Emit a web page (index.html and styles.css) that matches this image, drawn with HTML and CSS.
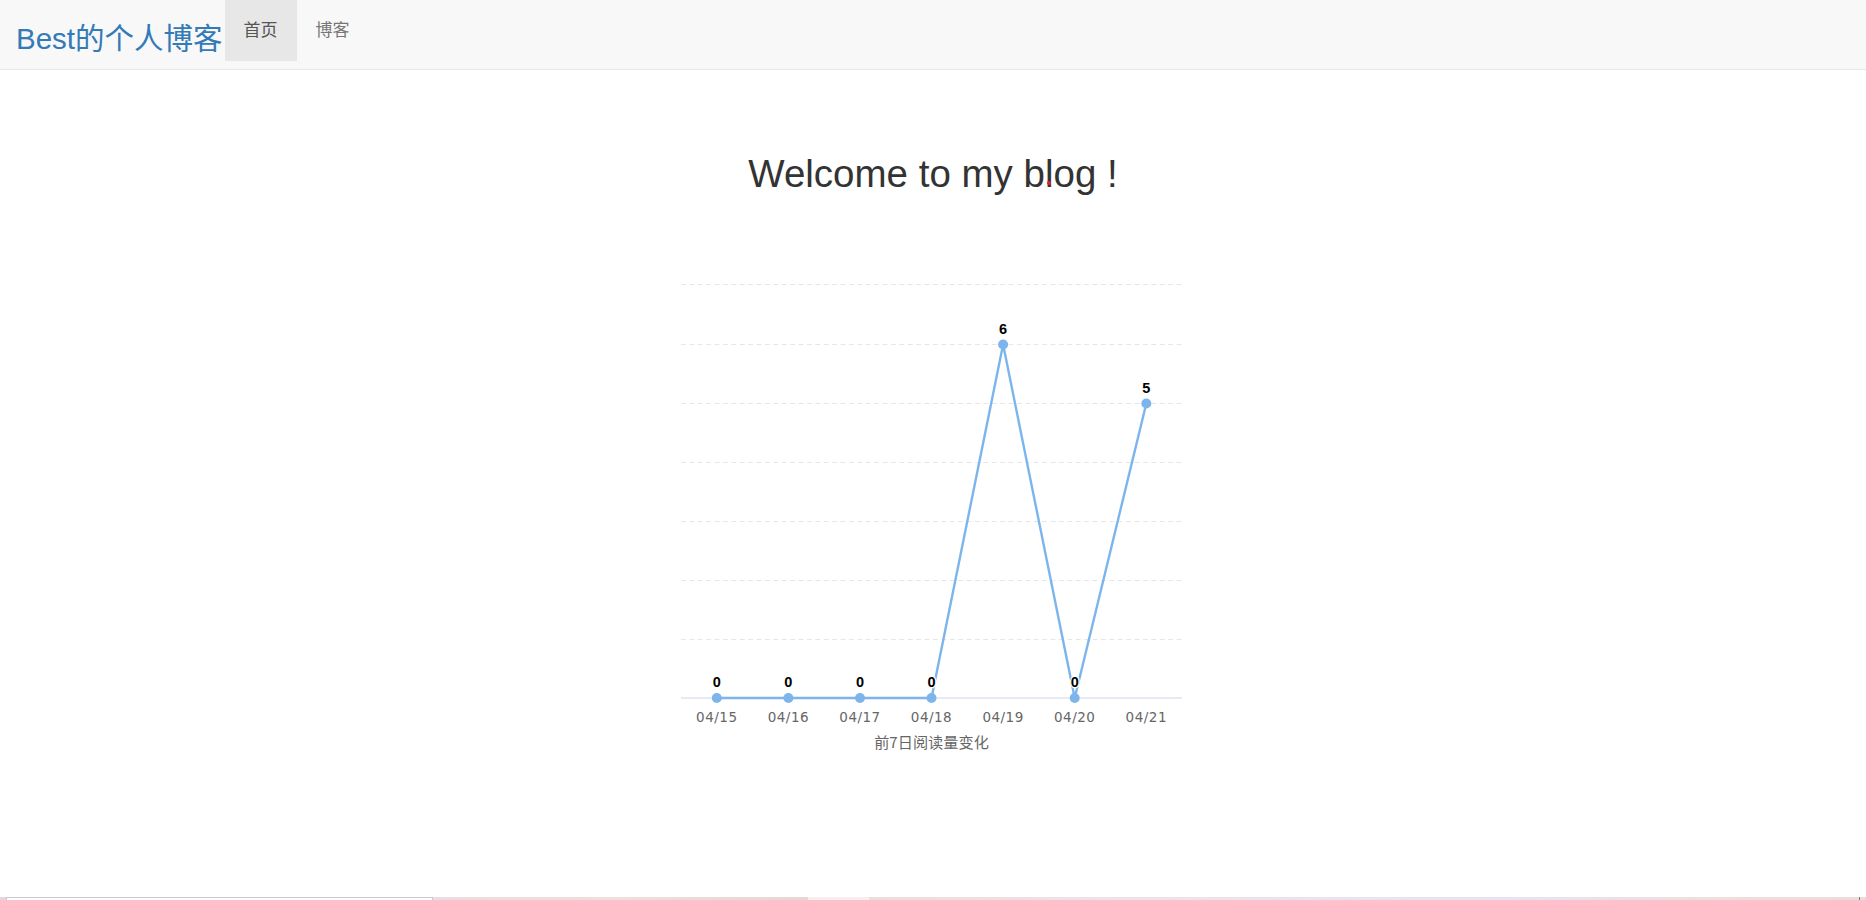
FILE: index.html
```html
<!DOCTYPE html>
<html lang="zh-CN">
<head>
<meta charset="utf-8">
<title>Best的个人博客</title>
<link rel="stylesheet" href="styles.css">
</head>
<body>
<div class="page">
  <nav class="navbar">
    <a class="brand" href="#">Best的个人博客</a>
    <ul class="nav">
      <li class="nav-item active"><a href="#">首页</a></li>
      <li class="nav-item"><a href="#">博客</a></li>
    </ul>
  </nav>

  <main class="main">
    <h1 class="welcome">Welcome to my b<span class="mark">l</span>og !</h1>

    <svg class="chart" width="540" height="500" viewBox="0 0 540 500" xmlns="http://www.w3.org/2000/svg">
      <g class="grid">
        <line x1="18" x2="519" y1="379.5" y2="379.5"/>
        <line x1="18" x2="519" y1="320.5" y2="320.5"/>
        <line x1="18" x2="519" y1="261.5" y2="261.5"/>
        <line x1="18" x2="519" y1="202.5" y2="202.5"/>
        <line x1="18" x2="519" y1="143.5" y2="143.5"/>
        <line x1="18" x2="519" y1="84.5" y2="84.5"/>
        <line x1="18" x2="519" y1="24.5" y2="24.5"/>
      </g>
      <line class="axis" x1="18" x2="519" y1="438" y2="438"/>
      <polyline class="series" points="53.8,438 125.4,438 197,438 268.5,438 340.1,84.5 411.7,438 483.3,143.5"/>
      <g class="markers">
        <circle cx="53.8" cy="438" r="5"/>
        <circle cx="125.4" cy="438" r="5"/>
        <circle cx="197" cy="438" r="5"/>
        <circle cx="268.5" cy="438" r="5"/>
        <circle cx="340.1" cy="84.5" r="5"/>
        <circle cx="411.7" cy="438" r="5"/>
        <circle cx="483.3" cy="143.5" r="5"/>
      </g>
      <g class="data-labels">
        <text x="53.8" y="427">0</text>
        <text x="125.4" y="427">0</text>
        <text x="197" y="427">0</text>
        <text x="268.5" y="427">0</text>
        <text x="340.1" y="73.5">6</text>
        <text x="411.7" y="427">0</text>
        <text x="483.3" y="132.5">5</text>
      </g>
      <g class="x-labels">
        <text x="53.8" y="462">04/15</text>
        <text x="125.4" y="462">04/16</text>
        <text x="197" y="462">04/17</text>
        <text x="268.5" y="462">04/18</text>
        <text x="340.1" y="462">04/19</text>
        <text x="411.7" y="462">04/20</text>
        <text x="483.3" y="462">04/21</text>
      </g>
      <text class="axis-title" x="268.5" y="488">前7日阅读量变化</text>
    </svg>
  </main>

  <div class="bottom-strip">
    <div class="seg seg-a"></div>
    <div class="seg seg-b"></div>
    <div class="seg seg-c"></div>
    <div class="seg seg-d"></div>
    <div class="seg seg-e"></div>
    <div class="seg seg-f"></div>
  </div>
</div>
</body>
</html>
```
FILE: styles.css
```css
html, body {
  margin: 0;
  padding: 0;
  background: #fff;
}

body {
  font-family: "Liberation Sans", "Noto Sans CJK SC", sans-serif;
  color: #333;
}

.page {
  height: 100vh;
  display: flex;
  flex-direction: column;
  overflow: hidden;
}

.navbar {
  display: flex;
  align-items: flex-start;
  height: 69px;
  flex-shrink: 0;
  background: #f8f8f8;
  border-bottom: 1px solid #e7e7e7;
}

.brand {
  display: block;
  padding: 22px 2px 13px 16px;
  font-size: 29.5px;
  line-height: 34px;
  color: #337ab7;
  text-decoration: none;
  white-space: nowrap;
}

.nav {
  display: flex;
  list-style: none;
  margin: 0;
  padding: 0;
}

.nav-item a {
  display: block;
  padding: 18px 19px;
  font-size: 17px;
  line-height: 25px;
  color: #777;
  text-decoration: none;
}

.nav-item.active a {
  background: #e7e7e7;
  color: #555;
}

.main {
  flex: 1;
  display: flex;
  flex-direction: column;
  align-items: center;
}

.welcome {
  margin: 82px 0 0;
  font-size: 38.5px;
  line-height: 44px;
  font-weight: normal;
  color: #333;
  text-align: center;
}

.mark {
  position: relative;
}

.mark::after {
  content: "";
  position: absolute;
  left: 2px;
  bottom: 10px;
  width: 4px;
  height: 4px;
  border-radius: 50%;
  background: #e8231f;
}

.chart {
  display: block;
  margin-top: 64px;
}

.grid line {
  stroke: #e6e6e6;
  stroke-width: 1;
  stroke-dasharray: 4.8 3.6;
}

.axis {
  stroke: #ccd6eb;
  stroke-width: 1.2;
}

.series {
  fill: none;
  stroke: #7cb5ec;
  stroke-width: 2.4;
  stroke-linejoin: round;
  stroke-linecap: round;
}

.markers circle {
  fill: #7cb5ec;
}

.data-labels text {
  font-family: "Liberation Sans", sans-serif;
  font-weight: bold;
  font-size: 14.5px;
  fill: #000;
  stroke: #fff;
  stroke-width: 2.4px;
  stroke-linejoin: round;
  paint-order: stroke;
  text-anchor: middle;
}

.x-labels text {
  font-family: "DejaVu Sans", sans-serif;
  font-size: 13.5px;
  letter-spacing: 0.5px;
  fill: #666;
  text-anchor: middle;
}

.axis-title {
  font-family: "Noto Sans CJK SC", sans-serif;
  font-size: 15.2px;
  fill: #666;
  text-anchor: middle;
}

.bottom-strip {
  display: flex;
  height: 3px;
  flex-shrink: 0;
}

.seg {
  height: 3px;
}

.seg-a {
  width: 6px;
  background: #e6d8d8;
}

.seg-b {
  width: 427px;
  box-sizing: border-box;
  background: #fff;
  border-top: 1px solid #c8c8c8;
  border-left: 1px solid #c8c8c8;
  border-right: 1px solid #c8c8c8;
}

.seg-c {
  width: 375px;
  background: linear-gradient(90deg, #eadcdf, #eedfdc 50%, #e7d6d2);
}

.seg-d {
  width: 61px;
  background: #f7efef;
}

.seg-e {
  flex: 1;
  background: linear-gradient(90deg, #ecdcdc, #efe2e6 25%, #e8e4f0 50%, #e6e4f2 65%, #ecdfdc 85%, #ebdcdc);
}

.seg-f {
  width: 6px;
  background: #e8dcdc;
  border-left: 1px solid #777;
}
```
